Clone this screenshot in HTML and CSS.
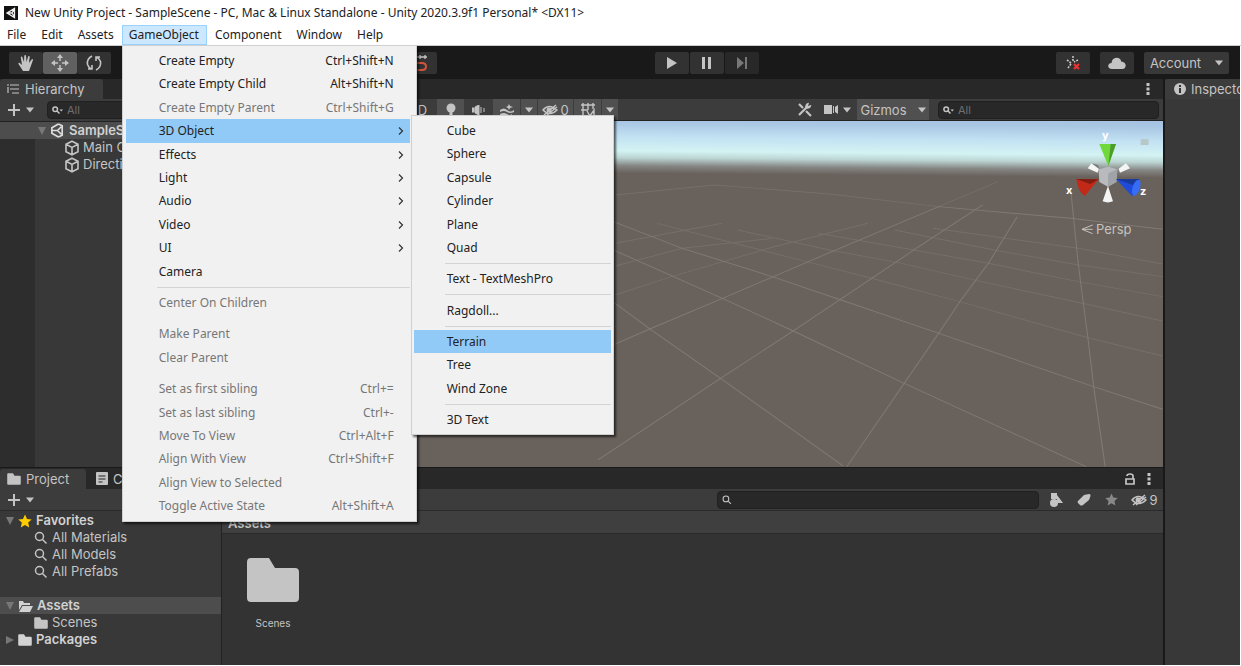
FILE: index.html
```html
<!DOCTYPE html>
<html lang="en">
<head>
<meta charset="utf-8">
<title>Unity Editor</title>
<link rel="stylesheet" href="styles.css">
</head>
<body>
<svg class="defs" aria-hidden="true">
  <symbol id="folder" viewBox="0 0 52 46"><path d="M4 1h18l6 10h20q4 0 4 4v26q0 4-4 4H4q-4 0-4-4V5q0-4 4-4z"/></symbol>
  <symbol id="cube" viewBox="0 0 16 16"><path d="M8 1.200l6 3v7.600l-6 3-6-3V4.200zM2 4.200l6 3.200 6-3.200M8 7.400v7.400" fill="none" stroke="currentColor" stroke-width="1.600"/></symbol>
  <symbol id="lens" viewBox="0 0 14 14"><path d="M8.500 8.500l4 4M9.500 5.500a4 4 0 1 1-8 0 4 4 0 0 1 8 0z" fill="none" stroke="currentColor" stroke-width="1.500"/></symbol>
  <symbol id="find" viewBox="0 0 12 8"><path d="M5 5l2.500 2.500M5.500 3.200a2.300 2.300 0 1 1-4.600 0 2.300 2.300 0 0 1 4.600 0z" fill="none" stroke="currentColor" stroke-width="1.500"/><path d="M7.500 3.500H11L9.250 5.500z"/></symbol>
  <symbol id="star" viewBox="0 0 14 14"><path d="M7 .5l2 4.400 4.700.5-3.500 3.200 1 4.800L7 11l-4.200 2.400 1-4.800L.3 5.400 5 4.900z"/></symbol>
  <symbol id="eye" viewBox="0 0 16 12"><path d="M1 6q6-7 14 0-7 7-14 0zM2 11L14 1M5 11L15 3" fill="none" stroke="currentColor" stroke-width="1.500"/><circle cx="7" cy="6" r="2.500"/></symbol>
  <symbol id="plus" viewBox="0 0 14 14"><path d="M6 1h2v5h5v2H8v5H6V8H1V6h5z"/></symbol>
  <symbol id="down" viewBox="0 0 8 6"><path d="M0 .5h8L4 5.500z"/></symbol>
  <symbol id="dots" viewBox="0 0 4 12"><path d="M.5 0h3v3h-3zM.5 4.500h3v3h-3zM.5 9h3v3h-3z"/></symbol>
  <symbol id="next" viewBox="0 0 6 8"><path d="M1 .5L4.500 4 1 7.500" fill="none" stroke="#333" stroke-width="1.200"/></symbol>
</svg>

<header class="titlebar">
  <svg class="app-icon" viewBox="0 0 14 14"><path d="M0 0h14v14H0z" fill="#111"/><path d="M10.500 2.500v9L3 7zM3.500 7H8M10.500 3L8 7l2.500 4" fill="none" stroke="#eee" stroke-width="1.300"/></svg>
  <span>New Unity Project - SampleScene - PC, Mac &amp; Linux Standalone - Unity 2020.3.9f1 Personal* &lt;DX11&gt;</span>
</header>

<nav class="menubar">
  <button>File</button>
  <button>Edit</button>
  <button>Assets</button>
  <div class="menu-host">
    <button class="open">GameObject</button>
    <ul class="menu main-menu">
      <li><button>Create Empty<kbd>Ctrl+Shift+N</kbd></button></li>
      <li><button>Create Empty Child<kbd>Alt+Shift+N</kbd></button></li>
      <li><button disabled>Create Empty Parent<kbd>Ctrl+Shift+G</kbd></button></li>
      <li class="sub-host"><button class="hot">3D Object<svg class="next"><use href="#next"/></svg></button>
        <ul class="menu sub-menu">
          <li><button>Cube</button></li>
          <li><button>Sphere</button></li>
          <li><button>Capsule</button></li>
          <li><button>Cylinder</button></li>
          <li><button>Plane</button></li>
          <li><button>Quad</button></li>
          <li class="sep"></li>
          <li><button>Text - TextMeshPro</button></li>
          <li class="sep"></li>
          <li><button>Ragdoll...</button></li>
          <li class="sep"></li>
          <li><button class="hot">Terrain</button></li>
          <li><button>Tree</button></li>
          <li><button>Wind Zone</button></li>
          <li class="sep"></li>
          <li><button>3D Text</button></li>
        </ul>
      </li>
      <li><button>Effects<svg class="next"><use href="#next"/></svg></button></li>
      <li><button>Light<svg class="next"><use href="#next"/></svg></button></li>
      <li><button>Audio<svg class="next"><use href="#next"/></svg></button></li>
      <li><button>Video<svg class="next"><use href="#next"/></svg></button></li>
      <li><button>UI<svg class="next"><use href="#next"/></svg></button></li>
      <li><button>Camera</button></li>
      <li class="sep"></li>
      <li><button disabled>Center On Children</button></li>
      <li class="sep blank"></li>
      <li><button disabled>Make Parent</button></li>
      <li><button disabled>Clear Parent</button></li>
      <li class="sep blank"></li>
      <li><button disabled>Set as first sibling<kbd>Ctrl+=</kbd></button></li>
      <li><button disabled>Set as last sibling<kbd>Ctrl+-</kbd></button></li>
      <li><button disabled>Move To View<kbd>Ctrl+Alt+F</kbd></button></li>
      <li><button disabled>Align With View<kbd>Ctrl+Shift+F</kbd></button></li>
      <li><button disabled>Align View to Selected</button></li>
      <li><button disabled>Toggle Active State<kbd>Alt+Shift+A</kbd></button></li>
    </ul>
  </div>
  <button>Component</button>
  <button>Window</button>
  <button>Help</button>
</nav>

<div class="editor">
  <div class="toolbar">
    <div class="tools">
      <button aria-label="Hand"><svg width="18" height="18" viewBox="0 0 18 18"><path d="M6 17L1.500 10q-.5-1.500 1-1.200L5 11 3.800 3.500q.2-1.300 1.400-.8L7 8l.3-6.500q1-1.200 1.700 0L9.500 8l1.700-5.800q1.200-.8 1.500.5L12 9l2.800-3.800q1.300-.4 1.200.9L13.500 13 12 17z"/></svg></button>
      <button class="on" aria-label="Move"><svg width="20" height="20" viewBox="0 0 20 20"><path d="M10 1l3 4H7zM10 19l3-4H7zM1 10l4-3v6zM19 10l-4-3v6z"/><path d="M10 5v3M10 12v3M5 10h3M12 10h3" stroke="currentColor" stroke-width="1.500"/></svg></button>
      <button aria-label="Rotate"><svg width="18" height="18" viewBox="0 0 18 18"><path d="M7 2Q1.500 5 2.500 10.500q1 3 4 4.500M3 15h4v-4M11 16q5.500-3 4.500-8.500-1-3-4-4.500M15 3h-4v4" fill="none" stroke="currentColor" stroke-width="1.600"/></svg></button>
      <button class="snap" aria-label="Snap"><svg width="16" height="18" viewBox="0 0 16 18"><path d="M3 1v4M8 1v4M13 1v4M1 3h14" stroke="currentColor" stroke-width="1.300"/><path d="M2 9h8q4 0 4 3.500T10 16H2" fill="none" stroke="#d0553a" stroke-width="2"/></svg></button>
    </div>
    <div class="play">
      <button aria-label="Play"><svg width="12" height="12" viewBox="0 0 12 12"><path d="M1 0l10 6-10 6z"/></svg></button>
      <button aria-label="Pause"><svg width="12" height="12" viewBox="0 0 12 12"><path d="M1 0h3v12H1zM7 0h3v12H7z"/></svg></button>
      <button class="dim" aria-label="Step"><svg width="12" height="12" viewBox="0 0 12 12"><path d="M1 0l7 6-7 6zM9 0h2v12H9z"/></svg></button>
    </div>
    <div class="services">
      <button aria-label="Collab"><svg width="18" height="18" viewBox="0 0 18 18"><path d="M9 2v5M3 6l4 3M14 6l-4 2M4 14l3-4" stroke="currentColor" stroke-width="1.600" stroke-dasharray="2 1"/><path d="M10 10l5 5M15 10l-5 5" stroke="#ee3030" stroke-width="2.200"/></svg></button>
      <button aria-label="Cloud"><svg width="18" height="12" viewBox="0 0 18 12"><path d="M4 12q-3.500 0-3.800-3Q.5 6 3.500 6 4 1 8.500.8q4 0 4.700 3.700Q17.500 5 17.700 8.500q-.3 3.500-3.500 3.500z"/></svg></button>
      <button class="account">Account<svg width="8" height="6"><use href="#down"/></svg></button>
    </div>
  </div>

  <div class="workspace">
    <div class="left">
      <div class="upper">
        <section class="hierarchy">
          <div class="tabs"><button class="tab htab"><svg width="12" height="10" viewBox="0 0 12 10"><path d="M0 1h2M3 1h9M3 5h9M5 9h7M1 3v6" stroke="currentColor" stroke-width="1.200"/></svg>Hierarchy</button></div>
          <div class="bar"><button class="add" aria-label="Create"><svg width="14" height="14"><use href="#plus"/></svg><svg width="8" height="6"><use href="#down"/></svg></button>
            <label class="search"><svg width="12" height="8"><use href="#find"/></svg><input type="text" aria-label="Search hierarchy" placeholder="All"></label></div>
          <div class="tree htree">
            <div class="row picked strong"><svg class="arrow" viewBox="0 0 8 8"><path d="M0 0h8L4 8z"/></svg><svg width="15" height="15" viewBox="0 0 16 16"><path d="M9 1L2 5v6l7 4M9 1l4 2v10l-4 2M2 8h6M8 8l4-4M8 8l4 4" fill="none" stroke="#ddd" stroke-width="1.800"/></svg>SampleScene</div>
            <div class="row kid"><svg width="16" height="16"><use href="#cube"/></svg>Main Camera</div>
            <div class="row kid"><svg width="16" height="16"><use href="#cube"/></svg>Directional Light</div>
          </div>
        </section>
        <section class="scene">
          <div class="tabs"><button class="more" aria-label="Scene options"><svg width="4" height="12"><use href="#dots"/></svg></button></div>
          <div class="bar scene-bar">
            <button class="two-d">2D</button>
            <button class="on" aria-label="Lighting"><svg width="10" height="14" viewBox="0 0 10 14"><circle cx="5" cy="5" r="4.500"/><path d="M3.500 9h3v4h-3z"/></svg></button>
            <button class="audio" aria-label="Audio"><svg width="14" height="10" viewBox="0 0 14 10"><path d="M0 3h2v4H0zM3 2l4-2v10L3 8zM9 2v6M12 3v4" stroke="currentColor"/></svg></button>
            <button class="on" aria-label="Effects"><svg width="14" height="12" viewBox="0 0 14 12"><path d="M0 6q4-3 7 0t7 0v2q-4 2-7 0T0 8zM0 10q4-2 7 0t5 0v2H0zM9 0l1 2 3 1-3 1-1 2-1-2-2-1 2-1z"/></svg></button>
            <button class="on drop" aria-label="Effects options"><svg width="8" height="6"><use href="#down"/></svg></button>
            <button class="on count"><svg width="16" height="12"><use href="#eye"/></svg>0</button>
            <button class="on" aria-label="Grid"><svg width="14" height="13" viewBox="0 0 14 13"><path d="M2 0v13M7 0v7M12 0v6M0 2h14M0 7h7M6 8l3 5 4-6v6" fill="none" stroke="currentColor" stroke-width="1.400"/></svg></button>
            <button class="on drop" aria-label="Grid options"><svg width="8" height="6"><use href="#down"/></svg></button>
            <span class="fill"></span>
            <button aria-label="Tools"><svg width="15" height="15" viewBox="0 0 15 15"><path d="M2 13L10 5M2 2l4 4M9 9l5 5" stroke="currentColor" stroke-width="2.200"/><path d="M9 2q3-2 3-1l-1 3 3-1q1 0-1 3-4 2-5-1z"/></svg></button>
            <button class="cam" aria-label="Camera"><svg width="14" height="9" viewBox="0 0 14 9"><path d="M0 0h8v9H0zM9 1h1v7H9zM11 2l3-2v9l-3-2z"/></svg><svg width="8" height="6"><use href="#down"/></svg></button>
            <button class="on gizmos">Gizmos<svg width="8" height="6"><use href="#down"/></svg></button>
            <label class="search scene-search"><svg width="12" height="8"><use href="#find"/></svg><input type="text" aria-label="Search scene" placeholder="All"></label>
          </div>
          <svg class="view" viewBox="223 121 940 346" preserveAspectRatio="xMaxYMin slice">
            <defs>
              <linearGradient id="sky" x1="0" y1="0" x2="0" y2="1">
                <stop offset="0" stop-color="#a3c1e0"/><stop offset=".18" stop-color="#a9c6e3"/><stop offset=".42" stop-color="#c3e2f3"/><stop offset=".64" stop-color="#d3f3f3"/><stop offset=".75" stop-color="#bcd5d3"/><stop offset=".88" stop-color="#858684"/><stop offset="1" stop-color="#69615c"/>
              </linearGradient>
            </defs>
            <path d="M223 121h940v346H223z" fill="#69615c"/>
            <path d="M223 111h960v62H223z" fill="url(#sky)" transform="rotate(.5 613 121)"/>
            <g transform="translate(600 110) scale(.3827 .3333)" fill="none" stroke="#99918c" stroke-width="2.800" opacity=".5">
              <path d="M-100 340L45 425 320 565 505 663 795 820l475 250M-100 465L45 585l85 72 185 148 320 263M-20 310l235 105 235 85 180 70 250 98 410 162 180 68M885 290l-345 167-220 108-190 92L0 722M1000 285L820 420 710 505 505 663 315 805-5 1050M1090 320l-75 140-75 115-55 95-90 150-150 250M1230 240l20 225 25 220 15 145 30 240M885 290l345 35 240 33"/>
              <path opacity=".55" d="M150 340l150 45 240 70 170 50 230 70 340 110 190 53M360 360l240 60 180 38 205 54 275 68 210 53M570 370l250 50 195 40 235 55 220 45M770 360l260 60 220 45 220 35M870 355l380 60 220 47M300 225l300 27 285 38M700 340L450 412 180 502 40 555M450 385L215 415 40 468M320 340L40 400M40 255l260-30M1040 215l-155 75"/>
            </g>
            <g transform="translate(820 40) scale(.3333)">
              <path d="M838 312h50l-23 66z" fill="#71d83b"/><path d="M872 312h16l-23 66z" fill="#4d9d2b"/>
              <path d="M803 385l12-15 22 16-4 12zM930 385l-12-15-22 16 4 12z" fill="#f5f5f5"/><path d="M815 370l20 5 2 11z" fill="#777c80"/>
              <path d="M836 388l29-8 27 8-3 38-25 14-26-14z" fill="#b8babd"/><path d="M865 400l27-12-3 38-25 14z" fill="#a0a3a7"/>
              <path d="M769 417l67 1-42 50q-20-13-25-51z" fill="#c22916"/><path d="M769 417l67 1-25 14z" fill="#801c12"/>
              <path d="M888 417h70q8 34-22 51z" fill="#1f4bd8"/><path d="M888 417h70l-12 20z" fill="#19399b"/><ellipse cx="949" cy="443" rx="11" ry="25" fill="#376cf4" transform="rotate(18 949 443)"/>
              <path d="M864 438l15 46q-15 7-31 0z" fill="#f4f4f4"/>
              <path d="M962 297h24v18h-24z" fill="#b8c8c8"/>
              <path d="M818 555l-32 13 32 13M786 568h32" fill="none" stroke="#c5c1be" stroke-width="3"/>
            </g>
            <g class="axes"><text x="1102" y="139">y</text><text x="1066" y="194">x</text><text x="1140" y="195">z</text></g>
            <text class="persp" x="1096" y="234">Persp</text>
          </svg>
        </section>
      </div>

      <section class="project">
        <div class="tabs project-tabs">
          <button class="tab ptab"><svg width="14" height="12"><use href="#folder"/></svg>Project</button>
          <button class="tab console"><svg width="12" height="13" viewBox="0 0 12 13"><path d="M1 0h10q1 0 1 1v11q0 1-1 1H1q-1 0-1-1V1q0-1 1-1z"/><path d="M2.500 4h7M2.500 7h7M2.500 10h4" stroke="#222" stroke-width="1.200"/></svg>Console</button>
          <button class="lock" aria-label="Lock"><svg width="10" height="12" viewBox="0 0 10 12"><path d="M1 6h8v5H1zM2 3q0-2 3-2t3 2v3" fill="none" stroke="currentColor" stroke-width="1.700"/></svg></button>
          <button class="more" aria-label="Project options"><svg width="4" height="12"><use href="#dots"/></svg></button>
        </div>
        <div class="bar project-bar">
          <button class="add" aria-label="Add asset"><svg width="14" height="14"><use href="#plus"/></svg><svg width="8" height="6"><use href="#down"/></svg></button>
          <label class="search project-search"><svg width="10" height="10"><use href="#lens"/></svg><input type="text" aria-label="Search project"></label>
          <button aria-label="Filter by type"><svg width="14" height="14" viewBox="0 0 14 14"><path d="M2 0h6v6H2zM8 2l6 8H8z"/><circle cx="5" cy="10" r="4"/></svg></button>
          <button aria-label="Filter by label"><svg width="14" height="12" viewBox="0 0 14 12"><path d="M1 7l6-6 5-1q2 0 1.500 2L12 6l-6 5q-2 1-3 0L1 9q-1-1 0-2z"/></svg></button>
          <button class="fav" aria-label="Favorite"><svg width="13" height="13"><use href="#star"/></svg></button>
          <button class="count nine"><svg width="16" height="12"><use href="#eye"/></svg>9</button>
        </div>
        <div class="browser">
          <div class="tree ptree">
            <div class="row strong"><svg class="arrow" viewBox="0 0 8 8"><path d="M0 0h8L4 8z"/></svg><svg class="gold" width="14" height="14"><use href="#star"/></svg>Favorites</div>
            <div class="row kid"><svg width="14" height="14"><use href="#lens"/></svg>All Materials</div>
            <div class="row kid"><svg width="14" height="14"><use href="#lens"/></svg>All Models</div>
            <div class="row kid"><svg width="14" height="14"><use href="#lens"/></svg>All Prefabs</div>
            <div class="row"></div>
            <div class="row picked strong"><svg class="arrow" viewBox="0 0 8 8"><path d="M0 0h8L4 8z"/></svg><svg width="15" height="12" viewBox="0 0 15 12"><path d="M0 1h5l1 2h6v2H4L1 10V1zM4.500 6H15l-3 6H1z"/></svg>Assets</div>
            <div class="row kid"><svg width="14" height="12"><use href="#folder"/></svg>Scenes</div>
            <div class="row strong"><svg class="arrow" viewBox="0 0 8 8"><path d="M0 0l8 4-8 4z"/></svg><svg width="14" height="12"><use href="#folder"/></svg>Packages</div>
          </div>
          <div class="files">
            <div class="crumb">Assets</div>
            <div class="grid"><div class="file"><svg width="52" height="46"><use href="#folder"/></svg><span>Scenes</span></div></div>
          </div>
        </div>
      </section>
    </div>
    <aside class="inspector">
      <div class="tabs"><button class="tab itab"><svg width="12" height="12" viewBox="0 0 12 12"><circle cx="6" cy="6" r="6"/><path d="M5 2h2v2H5zM5 5h2v5H5z" fill="#333"/></svg>Inspector</button></div>
    </aside>
  </div>
</div>
</body>
</html>
```
FILE: styles.css
```css
* { box-sizing: border-box; }
body {
  margin: 0;
  min-height: 100vh;
  display: flex;
  flex-direction: column;
  overflow: hidden;
  background: #fff;
  color: #c4c4c4;
  font: 13px/16px Inter, "Liberation Sans", sans-serif;
}
button {
  display: flex;
  align-items: center;
  justify-content: center;
  margin: 0;
  padding: 0;
  border: 0;
  background: none;
  color: inherit;
  font: inherit;
  white-space: nowrap;
}
svg { flex: none; fill: currentColor; }
.defs { position: absolute; width: 0; height: 0; }

/* window chrome */
.titlebar {
  display: flex;
  align-items: center;
  gap: 7px;
  height: 25px;
  padding-left: 4px;
  color: #222;
  font: 12px/16px "Noto Sans", "Open Sans", sans-serif;
}
.app-icon { width: 14px; height: 14px; }
.menubar {
  display: flex;
  gap: 1px;
  height: 21px;
  border-bottom: 1px solid #ccc;
  color: #222;
  font: 12px/16px "Noto Sans", "Open Sans", sans-serif;
}
.menubar > button, .menu-host > button { height: 20px; padding: 0 7px; }
.menu-host { position: relative; }
.menu-host .open { padding: 0 8px 0 7px; background: #cce8ff; box-shadow: inset 0 0 0 1px #99d1ff; }

/* drop-down menus */
.menu {
  position: absolute;
  z-index: 5;
  display: flex;
  flex-direction: column;
  margin: 0;
  padding: 3px 2px;
  list-style: none;
  background: #f1f1f1;
  border: 1px solid #d0d0d0;
  box-shadow: 2px 2px 2px rgba(0, 0, 0, .6);
}
.menu li { display: flex; flex: 3 1 0; }
.menu li.sep { flex: 1 1 0; align-items: center; }
.menu li.sep::before { content: ""; height: 1px; flex: 1; margin-left: 31px; background: #d4d4d4; }
.menu li.blank::before { background: none; }
.menu button { flex: 1; justify-content: flex-start; padding: 0 16px 0 33px; }
.menu button:disabled { color: #777; }
.menu .hot { background: #91c9f7; }
.menu kbd { margin-left: auto; font: inherit; }
.menu .next { width: 6px; height: 8px; margin-left: auto; }
.main-menu { top: 20px; left: 0; width: 295px; height: 477px; padding-right: 6px; padding-left: 3px; }
.main-menu > li > button:has(.next) { padding-right: 6px; }
.sub-host { position: relative; }
.menu .sub-menu { top: -4px; left: 285px; width: 203px; height: 320px; }

/* editor frame */
.editor { flex: 1; display: flex; flex-direction: column; margin: 0 1px 1px 0; background: #191919; }
.toolbar { display: flex; align-items: center; height: 33px; padding: 0 11px 0 9px; }
.toolbar button { width: 34px; height: 22px; background: #323232; border-radius: 2px; }
.tools { display: flex; width: 428px; }
.tools .on { background: #606060; }
.toolbar .snap { margin-left: auto; }
.play { display: flex; gap: 1px; margin-left: 218px; }
.play .dim { color: #777; background: #282828; }
.services { display: flex; gap: 10px; margin-left: auto; }
.toolbar .account { width: 85px; gap: 14px; background: #383838; }

.workspace { flex: 1; display: flex; gap: 2px; }
.left { flex: 1; min-width: 0; display: flex; flex-direction: column; gap: 1px; }
.inspector { width: 75px; overflow: hidden; background: #383838; }
.upper { flex: 388 1 0; display: flex; gap: 1px; min-height: 0; }
.hierarchy { width: 222px; display: flex; flex-direction: column; background: #383838; }
.scene { flex: 1; min-width: 0; display: flex; flex-direction: column; }
.project { flex: 197 1 0; display: flex; flex-direction: column; min-height: 0; }
.tabs { display: flex; align-items: center; height: 20px; background: #282828; }
.tab { height: 20px; gap: 5px; padding: 0 7px; }
.htab, .ptab, .itab { background: #3c3c3c; border-radius: 3px 3px 0 0; }
.htab { width: 103px; justify-content: flex-start; gap: 6px; }
.itab { padding-left: 9px; justify-content: flex-start; }
.more { margin-left: auto; width: 30px; height: 20px; }
.bar { display: flex; align-items: center; height: 22px; background: #3c3c3c; }
.add { gap: 5px; padding: 0 13px 0 7px; }
.search { display: flex; align-items: center; gap: 3px; flex: 1; height: 18px; padding-left: 4px; background: #282828; border: 1px solid #202020; border-radius: 4px; }
.search input { width: 0; flex: 1; padding: 0; border: 0; outline: 0; background: none; color: inherit; font: 11px/16px Inter, sans-serif; }
.search input::placeholder { color: #707070; opacity: 1; }

/* trees */
.tree { font-size: 13px; line-height: 17px; }
.row { display: flex; align-items: center; gap: 4px; height: 17px; padding-left: 6px; white-space: nowrap; overflow: hidden; }
.kid { padding-left: 34px; }
.strong { font-weight: 600; color: #d2d2d2; }
.picked { background: #4d4d4d; }
.arrow { width: 8px; height: 8px; color: #777; }
.htree { flex: 1; border-top: 1px solid #222; background: linear-gradient(90deg, #2d2d2d 35px, #383838 35px); }
.htree .strong { padding-left: 38px; }
.htree .kid { padding-left: 64px; gap: 3px; }

/* scene */
.scene-bar { padding: 0 4px 0 178px; gap: 1px; border-bottom: 1px solid #222; }
.scene-bar button { width: 27px; height: 21px; }
.scene-bar .on { background: #505050; }
.scene-bar .two-d { width: 35px; }
.scene-bar .drop { width: 16px; }
.scene-bar .count { width: 35px; }
.scene-bar .cam { width: 37px; gap: 5px; }
.scene-bar .gizmos { width: 72px; gap: 11px; }
.count { gap: 2px; }
.fill { flex: 1; }
.scene-search { flex: none; width: 221px; margin-left: 8px; }
.view { display: block; flex: 1; min-height: 0; width: 100%; }
.axes { fill: #fff; font: bold 11px Inter, sans-serif; }
.persp { fill: #c5c1be; font: 13px Inter, sans-serif; }

/* project */
.project-tabs { height: 21px; }
.ptab { width: 86px; justify-content: flex-start; }
.console { margin-left: 3px; }
.lock { margin-left: auto; }
.lock + .more { margin-left: 0; width: 28px; }
.project-bar { gap: 1px; border-bottom: 1px solid #2a2a2a; }
.project-bar button { width: 27px; }
.project-bar .add { width: 40px; padding: 0; }
.project-search { flex: none; width: 322px; margin: 0 2px 0 auto; }
.project-bar .fav { color: #888; }
.project-bar .nine { width: 37px; }
.browser { flex: 1; display: flex; gap: 1px; background: #222; }
.ptree { width: 221px; padding-top: 1px; background: #383838; }
.gold { color: #fc0; }
.files { flex: 1; background: #333; }
.crumb { height: 23px; padding: 4px 6px; background: #3f3f3f; border-bottom: 1px solid #292929; font-weight: 600; }
.grid { display: flex; padding: 23px 25px; }
.file { display: flex; flex-direction: column; align-items: center; gap: 12px; font-size: 10px; }
```
